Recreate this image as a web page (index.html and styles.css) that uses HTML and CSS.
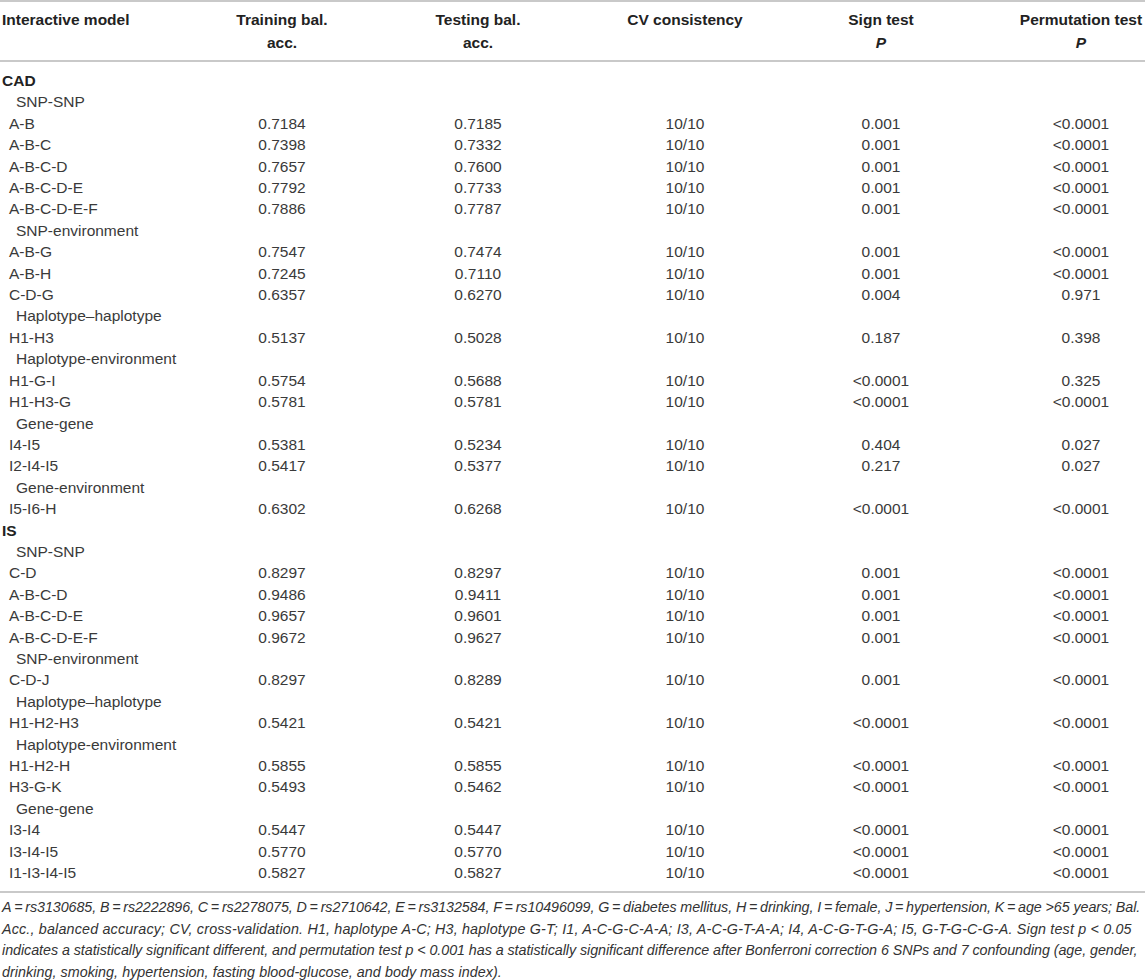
FILE: index.html
```html
<!DOCTYPE html>
<html>
<head>
<meta charset="utf-8">
<link rel="stylesheet" href="styles.css">
</head>
<body>
<div class="wrap">
<table class="data">
<colgroup>
<col class="c1"><col class="c2"><col class="c3"><col class="c4"><col class="c5"><col class="c6">
</colgroup>
<thead>
<tr>
<th class="lab">Interactive model</th>
<th>Training bal.<br>acc.</th>
<th>Testing bal.<br>acc.</th>
<th>CV consistency</th>
<th>Sign test<br><i>P</i></th>
<th>Permutation test<br><i>P</i></th>
</tr>
</thead>
<tbody>
<tr class="first"><td class="lab grp">CAD</td><td></td><td></td><td></td><td></td><td></td></tr>
<tr><td class="lab sub">SNP-SNP</td><td></td><td></td><td></td><td></td><td></td></tr>
<tr><td class="lab item">A-B</td><td>0.7184</td><td>0.7185</td><td>10/10</td><td>0.001</td><td>&lt;0.0001</td></tr>
<tr><td class="lab item">A-B-C</td><td>0.7398</td><td>0.7332</td><td>10/10</td><td>0.001</td><td>&lt;0.0001</td></tr>
<tr><td class="lab item">A-B-C-D</td><td>0.7657</td><td>0.7600</td><td>10/10</td><td>0.001</td><td>&lt;0.0001</td></tr>
<tr><td class="lab item">A-B-C-D-E</td><td>0.7792</td><td>0.7733</td><td>10/10</td><td>0.001</td><td>&lt;0.0001</td></tr>
<tr><td class="lab item">A-B-C-D-E-F</td><td>0.7886</td><td>0.7787</td><td>10/10</td><td>0.001</td><td>&lt;0.0001</td></tr>
<tr><td class="lab sub">SNP-environment</td><td></td><td></td><td></td><td></td><td></td></tr>
<tr><td class="lab item">A-B-G</td><td>0.7547</td><td>0.7474</td><td>10/10</td><td>0.001</td><td>&lt;0.0001</td></tr>
<tr><td class="lab item">A-B-H</td><td>0.7245</td><td>0.7110</td><td>10/10</td><td>0.001</td><td>&lt;0.0001</td></tr>
<tr><td class="lab item">C-D-G</td><td>0.6357</td><td>0.6270</td><td>10/10</td><td>0.004</td><td>0.971</td></tr>
<tr><td class="lab sub">Haplotype–haplotype</td><td></td><td></td><td></td><td></td><td></td></tr>
<tr><td class="lab item">H1-H3</td><td>0.5137</td><td>0.5028</td><td>10/10</td><td>0.187</td><td>0.398</td></tr>
<tr><td class="lab sub">Haplotype-environment</td><td></td><td></td><td></td><td></td><td></td></tr>
<tr><td class="lab item">H1-G-I</td><td>0.5754</td><td>0.5688</td><td>10/10</td><td>&lt;0.0001</td><td>0.325</td></tr>
<tr><td class="lab item">H1-H3-G</td><td>0.5781</td><td>0.5781</td><td>10/10</td><td>&lt;0.0001</td><td>&lt;0.0001</td></tr>
<tr><td class="lab sub">Gene-gene</td><td></td><td></td><td></td><td></td><td></td></tr>
<tr><td class="lab item">I4-I5</td><td>0.5381</td><td>0.5234</td><td>10/10</td><td>0.404</td><td>0.027</td></tr>
<tr><td class="lab item">I2-I4-I5</td><td>0.5417</td><td>0.5377</td><td>10/10</td><td>0.217</td><td>0.027</td></tr>
<tr><td class="lab sub">Gene-environment</td><td></td><td></td><td></td><td></td><td></td></tr>
<tr><td class="lab item">I5-I6-H</td><td>0.6302</td><td>0.6268</td><td>10/10</td><td>&lt;0.0001</td><td>&lt;0.0001</td></tr>
<tr><td class="lab grp">IS</td><td></td><td></td><td></td><td></td><td></td></tr>
<tr><td class="lab sub">SNP-SNP</td><td></td><td></td><td></td><td></td><td></td></tr>
<tr><td class="lab item">C-D</td><td>0.8297</td><td>0.8297</td><td>10/10</td><td>0.001</td><td>&lt;0.0001</td></tr>
<tr><td class="lab item">A-B-C-D</td><td>0.9486</td><td>0.9411</td><td>10/10</td><td>0.001</td><td>&lt;0.0001</td></tr>
<tr><td class="lab item">A-B-C-D-E</td><td>0.9657</td><td>0.9601</td><td>10/10</td><td>0.001</td><td>&lt;0.0001</td></tr>
<tr><td class="lab item">A-B-C-D-E-F</td><td>0.9672</td><td>0.9627</td><td>10/10</td><td>0.001</td><td>&lt;0.0001</td></tr>
<tr><td class="lab sub">SNP-environment</td><td></td><td></td><td></td><td></td><td></td></tr>
<tr><td class="lab item">C-D-J</td><td>0.8297</td><td>0.8289</td><td>10/10</td><td>0.001</td><td>&lt;0.0001</td></tr>
<tr><td class="lab sub">Haplotype–haplotype</td><td></td><td></td><td></td><td></td><td></td></tr>
<tr><td class="lab item">H1-H2-H3</td><td>0.5421</td><td>0.5421</td><td>10/10</td><td>&lt;0.0001</td><td>&lt;0.0001</td></tr>
<tr><td class="lab sub">Haplotype-environment</td><td></td><td></td><td></td><td></td><td></td></tr>
<tr><td class="lab item">H1-H2-H</td><td>0.5855</td><td>0.5855</td><td>10/10</td><td>&lt;0.0001</td><td>&lt;0.0001</td></tr>
<tr><td class="lab item">H3-G-K</td><td>0.5493</td><td>0.5462</td><td>10/10</td><td>&lt;0.0001</td><td>&lt;0.0001</td></tr>
<tr><td class="lab sub">Gene-gene</td><td></td><td></td><td></td><td></td><td></td></tr>
<tr><td class="lab item">I3-I4</td><td>0.5447</td><td>0.5447</td><td>10/10</td><td>&lt;0.0001</td><td>&lt;0.0001</td></tr>
<tr><td class="lab item">I3-I4-I5</td><td>0.5770</td><td>0.5770</td><td>10/10</td><td>&lt;0.0001</td><td>&lt;0.0001</td></tr>
<tr class="last"><td class="lab item">I1-I3-I4-I5</td><td>0.5827</td><td>0.5827</td><td>10/10</td><td>&lt;0.0001</td><td>&lt;0.0001</td></tr>
</tbody>
</table>
<p class="note"><span class="ln l1">A&#8201;=&#8201;rs3130685, B&#8201;=&#8201;rs2222896, C&#8201;=&#8201;rs2278075, D&#8201;=&#8201;rs2710642, E&#8201;=&#8201;rs3132584, F&#8201;=&#8201;rs10496099, G&#8201;=&#8201;diabetes mellitus, H&#8201;=&#8201;drinking, I&#8201;=&#8201;female, J&#8201;=&#8201;hypertension, K&#8201;=&#8201;age &gt;65 years; Bal.</span><span class="ln l2">Acc., balanced accuracy; CV, cross-validation. H1, haplotype A-C; H3, haplotype G-T; I1, A-C-G-C-A-A; I3, A-C-G-T-A-A; I4, A-C-G-T-G-A; I5, G-T-G-C-G-A. Sign test p &lt; 0.05</span><span class="ln l3">indicates a statistically significant different, and permutation test p &lt; 0.001 has a statistically significant difference after Bonferroni correction 6 SNPs and 7 confounding (age, gender,</span><span class="ln l4">drinking, smoking, hypertension, fasting blood-glucose, and body mass index).</span></p>
</div>
</body>
</html>
```
FILE: styles.css
```css
html, body {
  margin: 0;
  padding: 0;
  background: #ffffff;
}
.wrap {
  width: 1145px;
  font-family: "Liberation Sans", Arial, Helvetica, sans-serif;
  color: #333333;
}
.data {
  width: 1145px;
  border-collapse: collapse;
  table-layout: fixed;
  border-top: 2px solid #c9c9c9;
  border-bottom: 2px solid #c9c9c9;
}
.c1 { width: 233px; }
.c2 { width: 98px; }
.c3 { width: 294px; }
.c4 { width: 120px; }
.c5 { width: 272px; }
.c6 { width: 128px; }
.data th {
  font-size: 15.5px;
  font-weight: bold;
  color: #222222;
  line-height: 23px;
  padding: 6px 0 6px 0;
  text-align: center;
  vertical-align: top;
  border-bottom: 2px solid #c9c9c9;
  white-space: nowrap;
}
.data td {
  font-size: 15.5px;
  line-height: 21.4px;
  padding: 0;
  text-align: center;
  white-space: nowrap;
  color: #3a3a3a;
}
.data th.lab, .data td.lab {
  text-align: left;
  padding-left: 2px;
}
.data td.grp {
  font-weight: bold;
  color: #222222;
}
.data td.sub { padding-left: 16px; }
.data td.item { padding-left: 9px; }
.data tr.first td { padding-top: 8px; }
.data tr.last td { padding-bottom: 8px; }
.note {
  margin: 4px 0 0 0;
  padding-left: 2px;
  font-size: 14.3px;
  line-height: 21.4px;
  font-style: italic;
  color: #333333;
}
.note .ln {
  display: block;
  white-space: nowrap;
}
.note .l1 { letter-spacing: -0.08px; }
.note .l2 { letter-spacing: 0.18px; }
.note .l3 { letter-spacing: -0.05px; }
.note .l4 { letter-spacing: 0.05px; }
```
